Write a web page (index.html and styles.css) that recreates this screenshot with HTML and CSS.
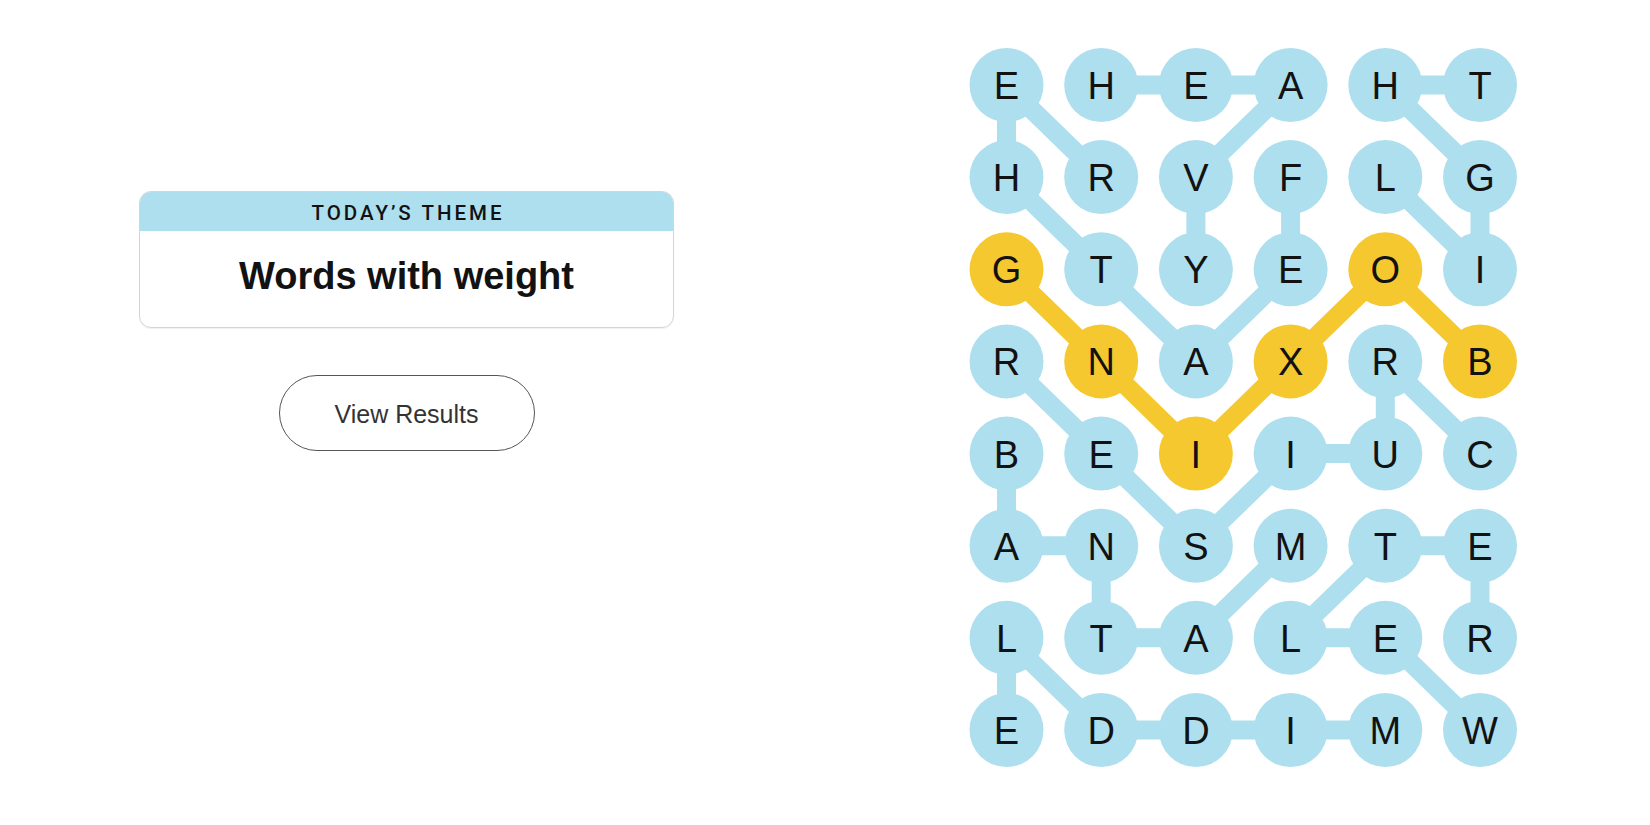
FILE: index.html
```html
<!DOCTYPE html>
<html lang="en">
<head>
<meta charset="utf-8">
<title>Strands</title>
<link rel="stylesheet" href="styles.css">
</head>
<body>
<main class="page">
  <section class="left">
    <div class="theme-card">
      <div class="theme-header">Today’s Theme</div>
      <div class="theme-body">Words with weight</div>
    </div>
    <button class="results-btn" type="button">View Results</button>
  </section>
  <section class="right">
    <svg class="board" width="567" height="730" viewBox="0 0 567 730" xmlns="http://www.w3.org/2000/svg">
      <g class="paths">
        <polyline points="141.2,45 235.9,45 330.6,45 235.9,137.1 235.9,229.3"/>
        <polyline points="330.6,137.1 330.6,229.3 235.9,321.4 141.2,229.3 46.5,137.1 46.5,45 141.2,137.1"/>
        <polyline points="425.3,137.1 520,229.3 520,137.1 425.3,45 520,45"/>
        <polyline points="520,413.6 425.3,321.4 425.3,413.6 330.6,413.6 235.9,505.7 141.2,413.6 46.5,321.4"/>
        <polyline points="46.5,413.6 46.5,505.7 141.2,505.7 141.2,597.8 235.9,597.8 330.6,505.7"/>
        <polyline points="425.3,690 330.6,690 235.9,690 141.2,690 46.5,597.8 46.5,690"/>
        <polyline points="520,690 425.3,597.8 330.6,597.8 425.3,505.7 520,505.7 520,597.8"/>
        <polyline class="span" points="520,321.4 425.3,229.3 330.6,321.4 235.9,413.6 141.2,321.4 46.5,229.3"/>
      </g>
      <g class="nodes">
        <g transform="translate(46.5,45)"><circle r="37"/><text y="14">E</text></g>
        <g transform="translate(141.2,45)"><circle r="37"/><text y="14">H</text></g>
        <g transform="translate(235.9,45)"><circle r="37"/><text y="14">E</text></g>
        <g transform="translate(330.6,45)"><circle r="37"/><text y="14">A</text></g>
        <g transform="translate(425.3,45)"><circle r="37"/><text y="14">H</text></g>
        <g transform="translate(520,45)"><circle r="37"/><text y="14">T</text></g>

        <g transform="translate(46.5,137.1)"><circle r="37"/><text y="14">H</text></g>
        <g transform="translate(141.2,137.1)"><circle r="37"/><text y="14">R</text></g>
        <g transform="translate(235.9,137.1)"><circle r="37"/><text y="14">V</text></g>
        <g transform="translate(330.6,137.1)"><circle r="37"/><text y="14">F</text></g>
        <g transform="translate(425.3,137.1)"><circle r="37"/><text y="14">L</text></g>
        <g transform="translate(520,137.1)"><circle r="37"/><text y="14">G</text></g>

        <g class="span" transform="translate(46.5,229.3)"><circle r="37"/><text y="14">G</text></g>
        <g transform="translate(141.2,229.3)"><circle r="37"/><text y="14">T</text></g>
        <g transform="translate(235.9,229.3)"><circle r="37"/><text y="14">Y</text></g>
        <g transform="translate(330.6,229.3)"><circle r="37"/><text y="14">E</text></g>
        <g class="span" transform="translate(425.3,229.3)"><circle r="37"/><text y="14">O</text></g>
        <g transform="translate(520,229.3)"><circle r="37"/><text y="14">I</text></g>

        <g transform="translate(46.5,321.4)"><circle r="37"/><text y="14">R</text></g>
        <g class="span" transform="translate(141.2,321.4)"><circle r="37"/><text y="14">N</text></g>
        <g transform="translate(235.9,321.4)"><circle r="37"/><text y="14">A</text></g>
        <g class="span" transform="translate(330.6,321.4)"><circle r="37"/><text y="14">X</text></g>
        <g transform="translate(425.3,321.4)"><circle r="37"/><text y="14">R</text></g>
        <g class="span" transform="translate(520,321.4)"><circle r="37"/><text y="14">B</text></g>

        <g transform="translate(46.5,413.6)"><circle r="37"/><text y="14">B</text></g>
        <g transform="translate(141.2,413.6)"><circle r="37"/><text y="14">E</text></g>
        <g class="span" transform="translate(235.9,413.6)"><circle r="37"/><text y="14">I</text></g>
        <g transform="translate(330.6,413.6)"><circle r="37"/><text y="14">I</text></g>
        <g transform="translate(425.3,413.6)"><circle r="37"/><text y="14">U</text></g>
        <g transform="translate(520,413.6)"><circle r="37"/><text y="14">C</text></g>

        <g transform="translate(46.5,505.7)"><circle r="37"/><text y="14">A</text></g>
        <g transform="translate(141.2,505.7)"><circle r="37"/><text y="14">N</text></g>
        <g transform="translate(235.9,505.7)"><circle r="37"/><text y="14">S</text></g>
        <g transform="translate(330.6,505.7)"><circle r="37"/><text y="14">M</text></g>
        <g transform="translate(425.3,505.7)"><circle r="37"/><text y="14">T</text></g>
        <g transform="translate(520,505.7)"><circle r="37"/><text y="14">E</text></g>

        <g transform="translate(46.5,597.8)"><circle r="37"/><text y="14">L</text></g>
        <g transform="translate(141.2,597.8)"><circle r="37"/><text y="14">T</text></g>
        <g transform="translate(235.9,597.8)"><circle r="37"/><text y="14">A</text></g>
        <g transform="translate(330.6,597.8)"><circle r="37"/><text y="14">L</text></g>
        <g transform="translate(425.3,597.8)"><circle r="37"/><text y="14">E</text></g>
        <g transform="translate(520,597.8)"><circle r="37"/><text y="14">R</text></g>

        <g transform="translate(46.5,690)"><circle r="37"/><text y="14">E</text></g>
        <g transform="translate(141.2,690)"><circle r="37"/><text y="14">D</text></g>
        <g transform="translate(235.9,690)"><circle r="37"/><text y="14">D</text></g>
        <g transform="translate(330.6,690)"><circle r="37"/><text y="14">I</text></g>
        <g transform="translate(425.3,690)"><circle r="37"/><text y="14">M</text></g>
        <g transform="translate(520,690)"><circle r="37"/><text y="14">W</text></g>
      </g>
    </svg>
  </section>
</main>
</body>
</html>
```

FILE: styles.css
```css
html, body {
  margin: 0;
  padding: 0;
  background: #ffffff;
}

body {
  font-family: "Liberation Sans", Arial, sans-serif;
  color: #121212;
}

.page {
  display: flex;
  width: 1650px;
  height: 825px;
}

.left {
  width: 813px;
  display: flex;
  flex-direction: column;
  align-items: center;
  padding-top: 191px;
  box-sizing: border-box;
}

.theme-card {
  width: 535px;
  box-sizing: border-box;
  border: 1px solid #d4d4d4;
  border-radius: 12px;
  overflow: hidden;
  box-shadow: 0 1px 1px rgba(0, 0, 0, 0.06);
}

.theme-header {
  height: 39px;
  background: #aedfee;
  display: flex;
  align-items: center;
  justify-content: center;
  padding-top: 2px;
  padding-left: 3px;
  box-sizing: border-box;
  font-family: Roboto, "Liberation Sans", Arial, sans-serif;
  font-weight: 500;
  font-size: 20.5px;
  letter-spacing: 3px;
  text-transform: uppercase;
  color: #121212;
}

.theme-body {
  height: 96px;
  display: flex;
  align-items: center;
  justify-content: center;
  padding-bottom: 5px;
  box-sizing: border-box;
  font-size: 38px;
  font-weight: bold;
  color: #121212;
}

.results-btn {
  margin-top: 47px;
  width: 256px;
  height: 76px;
  border-radius: 38px;
  border: 1.5px solid #555555;
  background: #ffffff;
  font-family: "Liberation Sans", Arial, sans-serif;
  font-size: 25px;
  color: #333333;
  padding: 3px 0 0;
  cursor: pointer;
}

.right {
  flex: 1;
  padding-left: 147px;
  padding-top: 40px;
  box-sizing: border-box;
}

.board {
  display: block;
}

.paths polyline {
  fill: none;
  stroke: #aedfee;
  stroke-width: 19;
  stroke-linejoin: round;
  stroke-linecap: round;
}

.paths polyline.span {
  stroke: #f6c830;
}

.nodes circle {
  fill: #aedfee;
}

.nodes .span circle {
  fill: #f6c830;
}

.nodes text {
  font-family: "Liberation Sans", Arial, sans-serif;
  font-size: 38px;
  fill: #121212;
  text-anchor: middle;
}
```
